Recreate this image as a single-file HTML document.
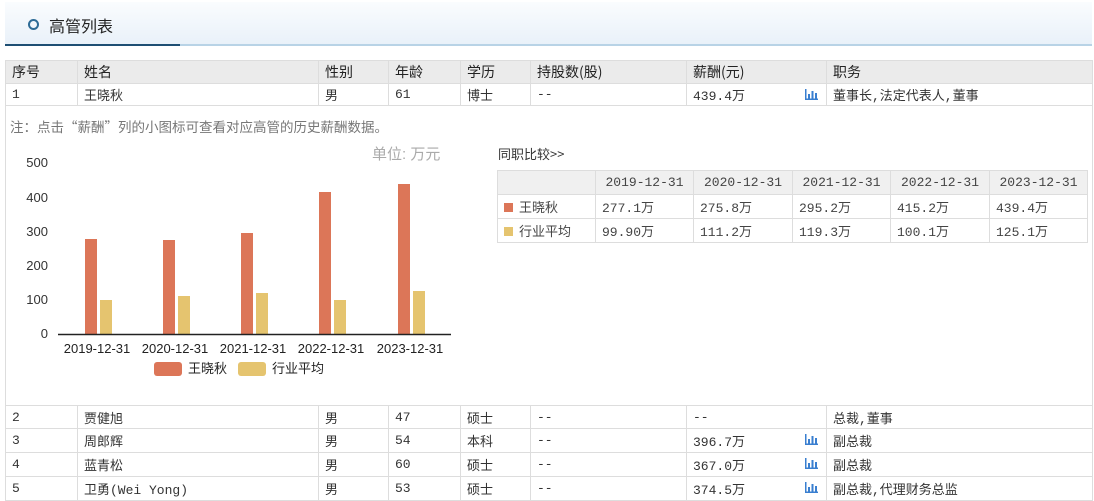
<!DOCTYPE html>
<html><head><meta charset="utf-8"><style>
*{margin:0;padding:0;box-sizing:border-box}
body{width:1094px;height:500px;overflow:hidden;background:#fff;font-family:"Liberation Mono","Noto Sans CJK SC",monospace;font-size:13px;color:#333;position:relative}
.hdr{position:absolute;left:5px;top:2px;width:1087px;height:44px;background:linear-gradient(#fafcfe,#e9f1f9);border-bottom:2px solid #b8d3e6}
.hdr .dk{position:absolute;left:0;bottom:-2px;width:175px;height:2px;background:#1e4f73}
.hdr .c{position:absolute;left:23px;top:17px;width:11px;height:11px;border:2px solid #2d6b96;border-radius:50%}
.hdr .t{position:absolute;left:44px;top:11px;font-size:16px;color:#222;font-family:"Noto Sans CJK SC",sans-serif}
table.m{position:absolute;left:5px;top:60px;border-collapse:collapse;table-layout:fixed;width:1087px}
td{border:1px solid #ddd;padding:0 6px;white-space:nowrap;overflow:hidden;font-family:"Liberation Mono","Noto Sans CJK SC",monospace;font-size:13px;position:relative}
tr.h td{background:#ebebeb;height:23px;font-family:"Noto Sans CJK SC",sans-serif;font-size:14px;color:#222}
.ic{position:absolute;right:8px;top:5px}
.cmp{position:absolute;left:497px;top:170px;border-collapse:collapse;table-layout:fixed;width:590px}
.cmp td{border:1px solid #ddd;height:24px;padding:0 6px;color:#444}
.cmp tr:first-child td{background:#f0f0f0;text-align:center;padding:0}
.sq{display:inline-block;width:9px;height:9px;margin-right:6px}
</style></head><body>
<div class="hdr"><div class="dk"></div><div class="c"></div><div class="t">高管列表</div></div>
<table class="m">
<colgroup><col style="width:72px"><col style="width:241px"><col style="width:70px"><col style="width:72px"><col style="width:70px"><col style="width:156px"><col style="width:140px"><col style="width:266px"></colgroup>
<tr class="h"><td>序号</td><td>姓名</td><td>性别</td><td>年龄</td><td>学历</td><td>持股数(股)</td><td>薪酬(元)</td><td>职务</td></tr>
<tr style="height:22px"><td>1</td><td>王晓秋</td><td>男</td><td>61</td><td>博士</td><td>--</td><td>439.4万<svg class="ic" width="13" height="11"><rect x="0" y="0" width="1.5" height="11" fill="#3a7fd0"/><rect x="0" y="9.5" width="13" height="1.5" fill="#3a7fd0"/><rect x="3" y="5" width="2" height="5" fill="#3a7fd0"/><rect x="6.5" y="2" width="2" height="8" fill="#3a7fd0"/><rect x="10" y="4" width="2" height="6" fill="#3a7fd0"/></svg></td><td>董事长,法定代表人,董事</td></tr>
<tr style="height:300px"><td colspan="8" style="vertical-align:top;padding:0"></td></tr>
<tr style="height:23px"><td>2</td><td>贾健旭</td><td>男</td><td>47</td><td>硕士</td><td>--</td><td>--</td><td>总裁,董事</td></tr>
<tr style="height:24px"><td>3</td><td>周郎辉</td><td>男</td><td>54</td><td>本科</td><td>--</td><td>396.7万<svg class="ic" width="13" height="11"><rect x="0" y="0" width="1.5" height="11" fill="#3a7fd0"/><rect x="0" y="9.5" width="13" height="1.5" fill="#3a7fd0"/><rect x="3" y="5" width="2" height="5" fill="#3a7fd0"/><rect x="6.5" y="2" width="2" height="8" fill="#3a7fd0"/><rect x="10" y="4" width="2" height="6" fill="#3a7fd0"/></svg></td><td>副总裁</td></tr>
<tr style="height:24px"><td>4</td><td>蓝青松</td><td>男</td><td>60</td><td>硕士</td><td>--</td><td>367.0万<svg class="ic" width="13" height="11"><rect x="0" y="0" width="1.5" height="11" fill="#3a7fd0"/><rect x="0" y="9.5" width="13" height="1.5" fill="#3a7fd0"/><rect x="3" y="5" width="2" height="5" fill="#3a7fd0"/><rect x="6.5" y="2" width="2" height="8" fill="#3a7fd0"/><rect x="10" y="4" width="2" height="6" fill="#3a7fd0"/></svg></td><td>副总裁</td></tr>
<tr style="height:24px"><td>5</td><td>卫勇(Wei Yong)</td><td>男</td><td>53</td><td>硕士</td><td>--</td><td>374.5万<svg class="ic" width="13" height="11"><rect x="0" y="0" width="1.5" height="11" fill="#3a7fd0"/><rect x="0" y="9.5" width="13" height="1.5" fill="#3a7fd0"/><rect x="3" y="5" width="2" height="5" fill="#3a7fd0"/><rect x="6.5" y="2" width="2" height="8" fill="#3a7fd0"/><rect x="10" y="4" width="2" height="6" fill="#3a7fd0"/></svg></td><td>副总裁,代理财务总监</td></tr>
</table>
<div style="position:absolute;left:10px;top:116px;color:#777;font-family:'Noto Sans CJK SC',sans-serif;font-size:13.5px">注：点击“薪酬”列的小图标可查看对应高管的历史薪酬数据。</div>
<svg style="position:absolute;left:0;top:140px" width="470" height="250" font-family="Liberation Sans,Noto Sans CJK SC,sans-serif" font-size="13">
<text x="372" y="19" fill="#aaa" font-size="15">单位: 万元</text>
<g fill="#333" text-anchor="end"><text x="48" y="27">500</text><text x="48" y="62">400</text><text x="48" y="96">300</text><text x="48" y="130">200</text><text x="48" y="164">100</text><text x="48" y="198">0</text></g>
<g fill="#dc7658"><rect x="85" y="99" width="12" height="95"/><rect x="163" y="100" width="12" height="94"/><rect x="241" y="93" width="12" height="101"/><rect x="319" y="52" width="12" height="142"/><rect x="398" y="44" width="12" height="150"/></g>
<g fill="#e5c46f"><rect x="100" y="160" width="12" height="34"/><rect x="178" y="156" width="12" height="38"/><rect x="256" y="153" width="12" height="41"/><rect x="334" y="160" width="12" height="34"/><rect x="413" y="151" width="12" height="43"/></g>
<line x1="58" y1="194.5" x2="451" y2="194.5" stroke="#222" stroke-width="1.5"/>
<g fill="#222" text-anchor="middle"><text x="97" y="213">2019-12-31</text><text x="175" y="213">2020-12-31</text><text x="253" y="213">2021-12-31</text><text x="331" y="213">2022-12-31</text><text x="410" y="213">2023-12-31</text></g>
<rect x="154" y="222" width="28" height="14" rx="3" fill="#dc7658"/><text x="188" y="233" fill="#222">王晓秋</text>
<rect x="238" y="222" width="28" height="14" rx="3" fill="#e5c46f"/><text x="272" y="233" fill="#222">行业平均</text>
</svg>
<div style="position:absolute;left:498px;top:144px;font-family:'Noto Sans CJK SC',sans-serif;font-size:13px">同职比较&gt;&gt;</div>
<table class="cmp">
<colgroup><col style="width:98px"><col style="width:98px"><col style="width:99px"><col style="width:98px"><col style="width:99px"><col style="width:98px"></colgroup>
<tr><td></td><td>2019-12-31</td><td>2020-12-31</td><td>2021-12-31</td><td>2022-12-31</td><td>2023-12-31</td></tr>
<tr><td><span class="sq" style="background:#dc7658"></span>王晓秋</td><td>277.1万</td><td>275.8万</td><td>295.2万</td><td>415.2万</td><td>439.4万</td></tr>
<tr><td><span class="sq" style="background:#e5c46f"></span>行业平均</td><td>99.90万</td><td>111.2万</td><td>119.3万</td><td>100.1万</td><td>125.1万</td></tr>
</table>
</body></html>
